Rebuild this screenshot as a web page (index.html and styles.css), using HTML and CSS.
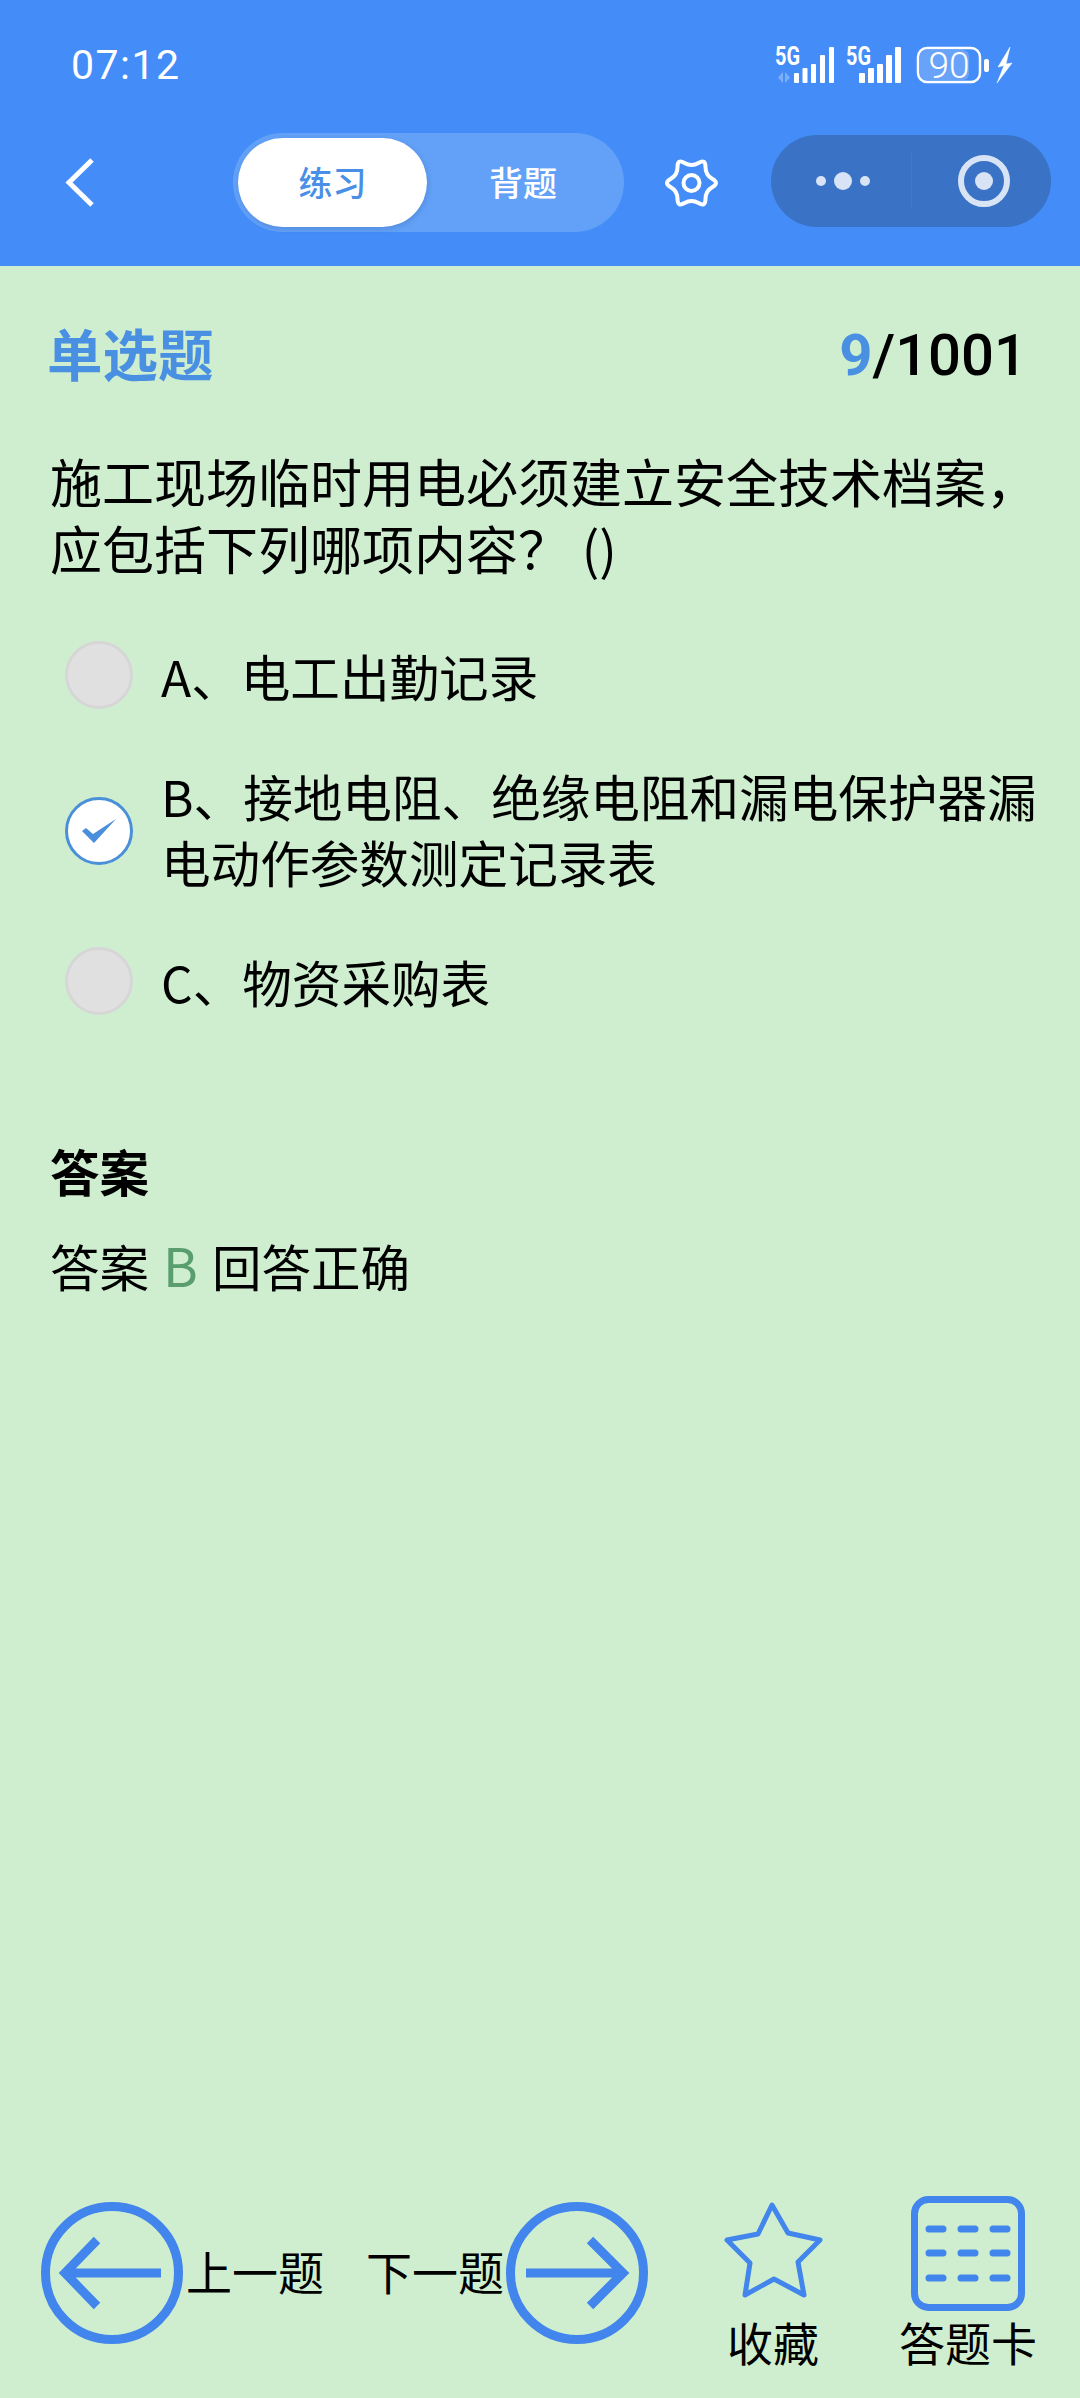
FILE: index.html
```html
<!DOCTYPE html>
<html lang="zh">
<head>
	<meta charset="UTF-8">
	<title>单选题</title>
	<link rel="stylesheet" href="styles.css">
</head>
<body>
<div class="page">
	<div class="top">
		<div class="status">
			<span class="time">07:12</span>
			<svg class="status-icons" width="240" height="56" viewBox="0 -8 240 56">
				<text class="net" x="1" y="20" textLength="25" lengthAdjust="spacingAndGlyphs">5G</text>
				<path d="M9 27v11l-5-5.500zM11 27v11l5-5.500z" fill="#fff" opacity=".3"/>
				<g fill="#fff">
					<rect x="20" y="28" width="5" height="10" rx="1"/>
					<rect x="28.500" y="23" width="5" height="15" rx="1"/>
					<rect x="37" y="19" width="5" height="19" rx="1"/>
					<rect x="46" y="10" width="5" height="28" rx="1"/>
					<rect x="55" y="2" width="5" height="36" rx="1"/>
				</g>
				<text class="net" x="72" y="20" textLength="25" lengthAdjust="spacingAndGlyphs">5G</text>
				<g fill="#fff">
					<rect x="85" y="28" width="6" height="10" rx="1"/>
					<rect x="94" y="23" width="6" height="15" rx="1"/>
					<rect x="103" y="19" width="6" height="19" rx="1"/>
					<rect x="112" y="10" width="6" height="28" rx="1"/>
					<rect x="121" y="2" width="6" height="36" rx="1"/>
				</g>
				<rect x="146" y="5" width="49" height="30" rx="6" fill="#fff" opacity=".2"/>
				<rect x="144" y="3" width="62" height="34" rx="9" fill="none" stroke="#fff" stroke-width="2.500"/>
				<text class="batt" x="175" y="33">90</text>
				<rect x="210" y="14" width="5" height="13" rx="2" fill="#fff"/>
				<path d="M236 2L224 22l6-1.500L223 38l15-20-6 1z" fill="#fff" stroke="#fff" stroke-width=".5"/>
			</svg>
		</div>
		<div class="nav">
			<svg class="back" width="29" height="49" viewBox="0 0 29 49"><path d="M27 2L4 24.500 27 47" fill="none" stroke="#fff" stroke-width="5"/></svg>
			<div class="tabs">
				<div class="tab on">练习</div>
				<div class="tab">背题</div>
			</div>
			<svg class="gear" width="55" height="52" viewBox="-27.500 -26 55 52">
				<path d="M7-20.100Q14-24.200 14-16.100 13.900-8 21-4 28 0 21 4 13.900 8 14 16.100 14 24.200 7 20.100 0 16-7 20.100-14 24.200-14 16.100-13.900 8-21 4-28 0-21-4-13.900-8-14-16.100-14-24.200-7-20.100 0-16 7-20.100z" fill="none" stroke="#fff" stroke-width="4" stroke-linejoin="round"/>
				<circle r="8" fill="none" stroke="#fff" stroke-width="4"/>
			</svg>
			<div class="capsule">
				<div class="more">
					<i class="dot"></i><i class="dot big"></i><i class="dot"></i>
				</div>
				<div class="line"></div>
				<div class="shot"><i></i></div>
			</div>
		</div>
	</div>

	<div class="main">
		<div class="head">
			<span class="kind">单选题</span>
			<span class="count"><b>9</b>/1001</span>
		</div>
		<div class="question">施工现场临时用电必须建立安全技术档案，应包括下列哪项内容？ ()</div>
		<ul class="options">
			<li>
				<span class="radio"></span>
				<span class="opt">A、电工出勤记录</span>
			</li>
			<li>
				<span class="radio checked">
					<svg width="36" height="26" viewBox="0 0 36 26"><path d="M1 13l4-3 7 6L35 1 13 25z" fill="#4a8fdc"/></svg>
				</span>
				<span class="opt">B、接地电阻、绝缘电阻和漏电保护器漏电动作参数测定记录表</span>
			</li>
			<li>
				<span class="radio"></span>
				<span class="opt">C、物资采购表</span>
			</li>
		</ul>
		<div class="answer-title">答案</div>
		<div class="answer">答案 <em>B</em> 回答正确</div>
	</div>

	<div class="bottom">
		<div class="step">
			<svg width="142" height="142" viewBox="0 0 142 142">
				<circle cx="71" cy="71" r="66.500" fill="none" stroke="#4285ec" stroke-width="9"/>
				<path d="M120 71H26M56 38L24 71l32 33" fill="none" stroke="#4285ec" stroke-width="9"/>
			</svg>
			<span class="step-text prev">上一题</span>
			<span class="step-text next">下一题</span>
			<svg width="142" height="142" viewBox="0 0 142 142">
				<circle cx="71" cy="71" r="66.500" fill="none" stroke="#4285ec" stroke-width="9"/>
				<path d="M20 71h94M84 38l33 33-33 33" fill="none" stroke="#4285ec" stroke-width="9"/>
			</svg>
		</div>
		<div class="tool star-tool">
			<svg width="100" height="115" viewBox="725 2196 100 115">
				<path d="M774 2205L790 2233 822 2240 800 2262 806 2295 776 2279 747 2295 752 2263 729 2240 760 2234z" fill="none" stroke="#4285ec" stroke-width="5" stroke-linejoin="round"/>
			</svg>
			<span class="tool-text">收藏</span>
		</div>
		<div class="tool card-tool">
			<svg width="114" height="115" viewBox="0 0 114 115">
				<rect x="3.500" y="3.500" width="107" height="108" rx="14" fill="none" stroke="#4285ec" stroke-width="7"/>
				<path d="M18 33h14M50 33h14M82 33h14M18 57h14M50 57h14M82 57h14M18 82h14M50 82h14M82 82h14" stroke="#4285ec" stroke-width="7" stroke-linecap="round"/>
			</svg>
			<span class="tool-text">答题卡</span>
		</div>
	</div>
</div>
</body>
</html>
```

FILE: styles.css
```css
body,div,ul,li,span{
	margin: 0;
	padding: 0;
}
li{
	list-style: none;
}
body{
	background: #cfeed0;
	font-family: "Noto Sans CJK SC", "Noto Sans", sans-serif;
	color: #000;
}
.page{
	width: 1080px;
	height: 2398px;
	display: flex;
	flex-direction: column;
	overflow: hidden;
}

/* header */
.top{
	height: 266px;
	background: #448df8;
}
.status{
	height: 133px;
	padding: 0 66px 3px 71px;
	box-sizing: border-box;
	display: flex;
	justify-content: space-between;
	align-items: center;
}
.time{
	font-family: Roboto, sans-serif;
	font-size: 41px;
	letter-spacing: 1.500px;
	color: #fff;
}
.net{
	font-family: Roboto, sans-serif;
	font-size: 25px;
	font-weight: 700;
	fill: #fff;
}
.batt{
	font-family: Roboto, sans-serif;
	font-size: 37px;
	font-weight: 300;
	fill: #fff;
	text-anchor: middle;
}
.nav{
	height: 99px;
	padding-left: 65px;
	display: flex;
	align-items: center;
}
.tabs{
	width: 391px;
	height: 99px;
	margin-left: 139px;
	padding: 5px;
	box-sizing: border-box;
	display: flex;
	border-radius: 50px;
	background: #62a1f7;
}
.tab{
	flex: 1;
	display: flex;
	align-items: center;
	justify-content: center;
	padding-bottom: 3px;
	box-sizing: border-box;
	font-size: 34px;
	font-weight: 500;
	color: #fff;
	border-radius: 45px;
}
.tab.on{
	flex: none;
	width: 189px;
	background: #fff;
	color: #4a8fe7;
	box-shadow: 1px 2px 5px rgba(40,80,150,.25);
}
.gear{
	margin-left: 40px;
}
.capsule{
	width: 280px;
	height: 92px;
	margin: -4px 0 0 52px;
	display: flex;
	align-items: center;
	border-radius: 46px;
	background: #3a72c6;
}
.more{
	width: 140px;
	padding-left: 3px;
	box-sizing: border-box;
	display: flex;
	align-items: center;
	justify-content: center;
	gap: 8px;
}
.dot{
	width: 10px;
	height: 10px;
	border-radius: 50%;
	background: #d8e4f5;
}
.dot.big{
	width: 18px;
	height: 18px;
}
.line{
	width: 1px;
	height: 56px;
	background: #4379c9;
}
.shot{
	width: 52px;
	height: 52px;
	margin-left: 46px;
	box-sizing: border-box;
	border: 6px solid #d8e4f5;
	border-radius: 50%;
	display: flex;
	align-items: center;
	justify-content: center;
}
.shot i{
	width: 18px;
	height: 18px;
	border-radius: 50%;
	background: #d8e4f5;
}

/* question */
.main{
	flex: 1;
	padding: 0 50px;
}
.head{
	margin-top: 46px;
	display: flex;
	justify-content: space-between;
	align-items: center;
	height: 80px;
}
.kind{
	margin-left: -3px;
	font-size: 55.500px;
	font-weight: 700;
	color: #4a90e2;
}
.count{
	margin: 6px 3px 0 0;
	font-family: Roboto, sans-serif;
	font-size: 58px;
	font-weight: 500;
}
.count b{
	font-weight: 700;
	color: #4a90e2;
}
.question{
	margin: 55px -20px 0 0;
	font-size: 52px;
	line-height: 67px;
}
.options{
	margin: 60px 0 0 15px;
}
.options li{
	display: flex;
	align-items: center;
	margin-bottom: 53px;
}
.radio{
	flex: none;
	width: 68px;
	height: 68px;
	box-sizing: border-box;
	border: 3px solid #d6d6d6;
	border-radius: 50%;
	background: #e0e0e0;
	display: flex;
	align-items: center;
	justify-content: center;
}
.radio.checked{
	margin-top: 5px;
	border-color: #4a90d9;
	background: #fff;
}
.opt{
	margin-left: 28px;
	margin-right: -20px;
	font-size: 49.600px;
	line-height: 66px;
}
.answer-title{
	margin-top: 122px;
	font-size: 49.500px;
	font-weight: 700;
	line-height: 68px;
}
.answer{
	margin-top: 25px;
	font-size: 49.500px;
	line-height: 68px;
}
.answer em{
	margin: 0 3px;
	font-style: normal;
	font-size: 53px;
	color: #5a9e6f;
}

/* bottom bar */
.bottom{
	height: 166px;
	margin-bottom: 36px;
	padding-left: 41px;
	display: flex;
	align-items: flex-start;
}
.step{
	margin-top: 6px;
	display: flex;
	align-items: center;
}
.step-text{
	width: 135px;
	padding-bottom: 6px;
	font-size: 46px;
	line-height: 60px;
	white-space: nowrap;
}
.step-text.prev{
	margin-left: 3px;
}
.step-text.next{
	margin-left: 45px;
	margin-right: 5px;
}
.tool{
	display: flex;
	flex-direction: column;
	align-items: center;
}
.star-tool{
	width: 120px;
	margin-left: 65px;
}
.card-tool{
	width: 140px;
	margin-left: 65px;
}
.tool-text{
	margin-top: 7px;
	font-size: 46px;
	line-height: 46px;
	white-space: nowrap;
}
```
